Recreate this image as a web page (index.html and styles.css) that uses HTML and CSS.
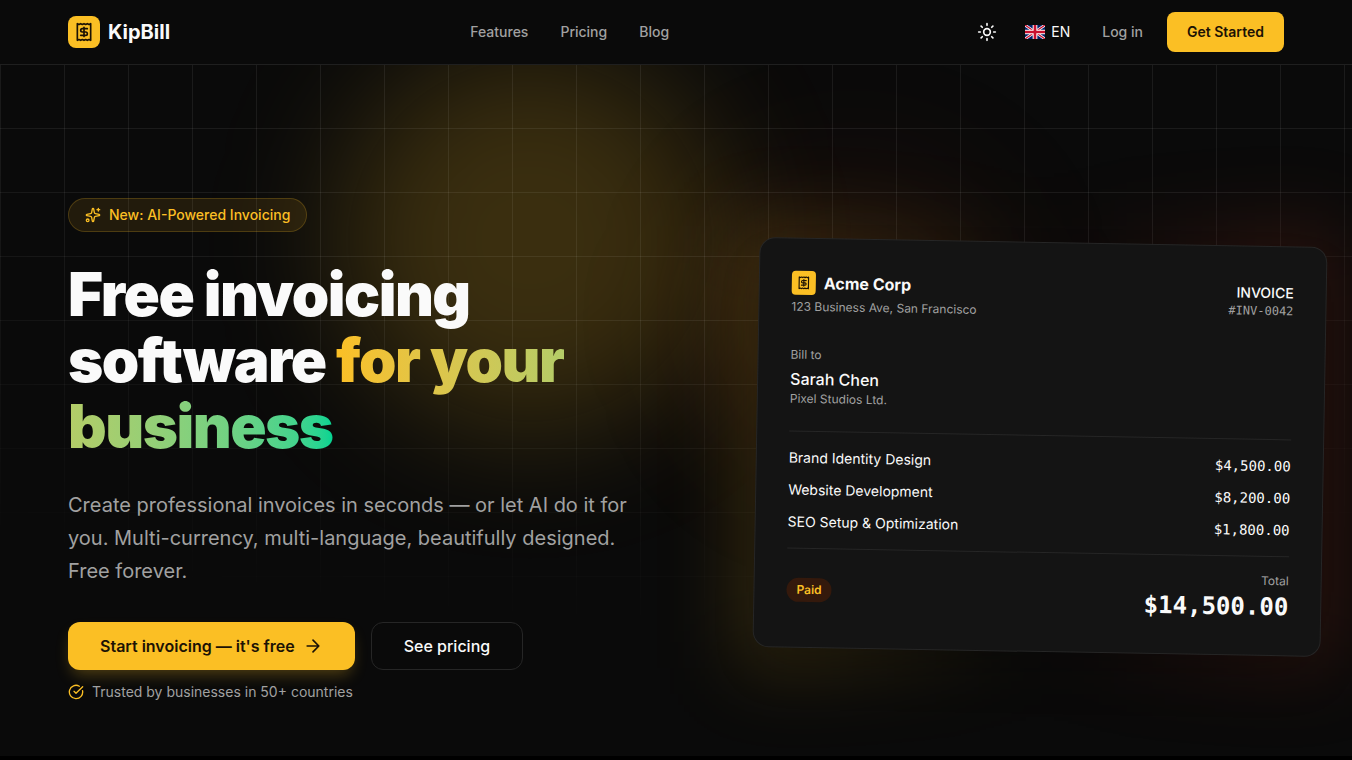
FILE: index.html
```html
<!DOCTYPE html>
<html lang="en">
<head>
    <meta charset="UTF-8">
    <meta name="viewport" content="width=device-width, initial-scale=1.0">
    <title>KipBill - Free invoicing software for your business</title>
    <link rel="stylesheet" href="styles.css">
</head>
<body>
    <!-- shared icons -->
    <svg class="sprite" aria-hidden="true">
        <symbol id="icon-receipt" viewBox="0 0 24 24">
            <path d="M4 2v20l2-1 2 1 2-1 2 1 2-1 2 1 2-1 2 1V2l-2 1-2-1-2 1-2-1-2 1-2-1-2 1Z"/>
            <path d="M16 8h-6a2 2 0 1 0 0 4h4a2 2 0 1 1 0 4H8"/>
            <path d="M12 17.5v-11"/>
        </symbol>
    </svg>

    <header class="site-header">
        <div class="container header-inner">
            <a href="#" class="brand">
                <span class="brand-icon"><svg class="icon" width="20" height="20"><use href="#icon-receipt"/></svg></span>
                KipBill
            </a>
            <nav class="main-nav">
                <a href="#features">Features</a>
                <a href="#pricing">Pricing</a>
                <a href="#blog">Blog</a>
            </nav>
            <div class="header-actions">
                <button type="button" class="theme-toggle" aria-label="Toggle theme">
                    <svg class="icon" width="20" height="20" viewBox="0 0 24 24">
                        <circle cx="12" cy="12" r="4"/>
                        <path d="M12 2v2M12 20v2M4.93 4.93l1.41 1.41M17.66 17.66l1.41 1.41M2 12h2M20 12h2M6.34 17.66l-1.41 1.41M19.07 4.93l-1.41 1.41"/>
                    </svg>
                </button>
                <button type="button" class="lang-button">
                    <svg width="20" height="14" viewBox="0 0 60 42" preserveAspectRatio="none" aria-hidden="true">
                        <rect width="60" height="42" fill="#012169"/>
                        <path d="M0 0l60 42M60 0L0 42" stroke="#fff" stroke-width="8"/>
                        <path d="M0 0l60 42M60 0L0 42" stroke="#c8102e" stroke-width="4"/>
                        <path d="M30 0v42M0 21h60" stroke="#fff" stroke-width="14"/>
                        <path d="M30 0v42M0 21h60" stroke="#c8102e" stroke-width="8"/>
                    </svg>
                    EN
                </button>
                <a href="#login" class="login-link">Log in</a>
                <a href="#signup" class="btn btn-small">Get Started</a>
            </div>
        </div>
    </header>

    <main>
        <section class="hero">
            <div class="hero-glow hero-glow-amber"></div>
            <div class="hero-glow hero-glow-red"></div>
            <div class="hero-grid"></div>

            <div class="container hero-inner">
                <div class="hero-text">
                    <span class="badge">
                        <svg class="icon" width="16" height="16" viewBox="0 0 24 24">
                            <path d="M11.017 2.814a1 1 0 0 1 1.966 0l1.051 5.558a2 2 0 0 0 1.594 1.594l5.558 1.051a1 1 0 0 1 0 1.966l-5.558 1.051a2 2 0 0 0-1.594 1.594l-1.051 5.558a1 1 0 0 1-1.966 0l-1.051-5.558a2 2 0 0 0-1.594-1.594l-5.558-1.051a1 1 0 0 1 0-1.966l5.558-1.051a2 2 0 0 0 1.594-1.594z"/>
                            <path d="M20 2v4M22 4h-4"/>
                            <circle cx="4" cy="20" r="2"/>
                        </svg>
                        New: AI-Powered Invoicing
                    </span>
                    <h1>Free invoicing software <span class="gradient-text">for your business</span></h1>
                    <p class="lead">Create professional invoices in seconds — or let AI do it for you. Multi-currency, multi-language, beautifully designed. Free forever.</p>
                    <div class="hero-buttons">
                        <a href="#signup" class="btn btn-large">
                            Start invoicing — it's free
                            <svg class="icon" width="20" height="20" viewBox="0 0 24 24"><path d="M5 12h14M12 5l7 7-7 7"/></svg>
                        </a>
                        <a href="#pricing" class="btn btn-large btn-outline">See pricing</a>
                    </div>
                    <p class="trusted">
                        <svg class="icon" width="16" height="16" viewBox="0 0 24 24">
                            <path d="M21.801 10A10 10 0 1 1 17 3.335"/>
                            <path d="m9 11 3 3L22 4"/>
                        </svg>
                        Trusted by businesses in 50+ countries
                    </p>
                </div>

                <div class="invoice-wrap">
                    <div class="invoice-glow"></div>
                    <article class="invoice">
                        <div class="invoice-head">
                            <div>
                                <div class="company">
                                    <span class="company-icon"><svg class="icon" width="14" height="14"><use href="#icon-receipt"/></svg></span>
                                    Acme Corp
                                </div>
                                <p class="small">123 Business Ave, San Francisco</p>
                            </div>
                            <div class="invoice-number">
                                <p class="invoice-title">INVOICE</p>
                                <p class="small mono">#INV-0042</p>
                            </div>
                        </div>
                        <div class="bill-to">
                            <p class="small">Bill to</p>
                            <p class="client">Sarah Chen</p>
                            <p class="small">Pixel Studios Ltd.</p>
                        </div>
                        <table class="items">
                            <tbody>
                                <tr><td>Brand Identity Design</td><td class="amount">$4,500.00</td></tr>
                                <tr><td>Website Development</td><td class="amount">$8,200.00</td></tr>
                                <tr><td>SEO Setup &amp; Optimization</td><td class="amount">$1,800.00</td></tr>
                            </tbody>
                        </table>
                        <div class="invoice-foot">
                            <span class="status">Paid</span>
                            <div class="total">
                                <p class="small">Total</p>
                                <p class="total-amount">$14,500.00</p>
                            </div>
                        </div>
                    </article>
                </div>
            </div>
        </section>
    </main>
</body>
</html>
```
FILE: styles.css
```css
* {
    box-sizing: border-box;
}
body {
    margin: 0;
    background: #000;
    color: #fafafa;
    font-family: Inter, "Liberation Sans", sans-serif;
    font-size: 14px;
    line-height: 20px;
}
h1, p {
    margin: 0;
}
a {
    color: inherit;
    text-decoration: none;
}
button {
    border: 0;
    background: none;
    color: inherit;
    font: inherit;
    cursor: pointer;
}
.sprite {
    display: none;
}
.icon {
    flex-shrink: 0;
    fill: none;
    stroke: currentColor;
    stroke-width: 2;
    stroke-linecap: round;
    stroke-linejoin: round;
}
.container {
    width: 100%;
    max-width: 1280px;
    margin: 0 auto;
    padding: 0 32px;
}

/* header */
.site-header {
    position: fixed;
    top: 0;
    left: 0;
    right: 0;
    z-index: 10;
    background: #0a0a0a;
    border-bottom: 1px solid #1f1f1f;
}
.header-inner {
    display: flex;
    align-items: center;
    justify-content: space-between;
    height: 64px;
}
.brand {
    display: flex;
    align-items: center;
    gap: 8px;
    font-size: 20px;
    font-weight: 700;
}
.brand-icon,
.company-icon {
    display: flex;
    align-items: center;
    justify-content: center;
    background: #fbbf24;
    color: #1c1204;
}
.brand-icon {
    width: 32px;
    height: 32px;
    border-radius: 8px;
}
.main-nav {
    display: flex;
    gap: 32px;
    color: #a1a1a1;
    font-weight: 500;
}
.header-actions {
    display: flex;
    align-items: center;
    gap: 12px;
}
.theme-toggle {
    display: flex;
    padding: 8px;
}
.lang-button {
    display: flex;
    align-items: center;
    gap: 6px;
    padding: 8px;
}
.login-link {
    padding: 8px 12px;
    color: #a1a1a1;
    font-weight: 500;
}
.btn {
    display: flex;
    align-items: center;
    justify-content: center;
    gap: 8px;
    background: #fbbf24;
    color: #1c1204;
    font-weight: 600;
}
.btn-small {
    height: 40px;
    padding: 0 20px;
    border-radius: 8px;
}

/* hero */
.hero {
    position: relative;
    overflow: hidden;
    padding: 198px 0 54px;
    background: #0a0a0a;
}
.hero-grid {
    position: absolute;
    inset: 0;
    background-image:
        linear-gradient(to right, rgba(255, 255, 255, 0.07) 1px, transparent 1px),
        linear-gradient(to bottom, rgba(255, 255, 255, 0.07) 1px, transparent 1px);
    background-size: 64px 64px;
    mask-image: radial-gradient(ellipse 100% 85% at 50% 0, #000 50%, transparent 100%);
}
.hero-glow {
    position: absolute;
    border-radius: 50%;
}
.hero-glow-amber {
    top: 48px;
    left: 25%;
    width: 384px;
    height: 384px;
    background: rgba(251, 191, 36, 0.2);
    filter: blur(64px);
}
.hero-glow-red {
    top: 160px;
    right: 25%;
    width: 320px;
    height: 320px;
    background: rgba(200, 60, 20, 0.08);
    filter: blur(64px);
}
.hero-inner {
    position: relative;
    display: grid;
    grid-template-columns: 1fr 1fr;
    align-items: center;
    gap: 64px;
}
.badge {
    display: inline-flex;
    align-items: center;
    gap: 8px;
    padding: 6px 16px;
    border: 1px solid rgba(251, 191, 36, 0.2);
    border-radius: 17px;
    background: rgba(251, 191, 36, 0.1);
    color: #fbbf24;
    font-weight: 500;
    vertical-align: top;
}
h1 {
    margin-top: 29px;
    font-size: 60px;
    font-weight: 900;
    line-height: 66px;
    letter-spacing: -0.025em;
}
.gradient-text {
    background: linear-gradient(to right in oklab, #fbbf24, #00d492);
    -webkit-background-clip: text;
    background-clip: text;
    color: transparent;
}
.lead {
    margin-top: 30px;
    color: #a1a1a1;
    font-size: 20px;
    line-height: 33px;
}
.hero-buttons {
    display: flex;
    gap: 16px;
    margin-top: 34px;
}
.btn-large {
    height: 48px;
    padding: 0 32px;
    border-radius: 12px;
    font-size: 16px;
    box-shadow: 0 8px 16px -4px rgba(251, 191, 36, 0.3);
}
.btn-outline {
    border: 1px solid #262626;
    background: #0a0a0a;
    color: #fafafa;
    font-weight: 500;
    box-shadow: none;
}
.trusted {
    display: flex;
    align-items: center;
    gap: 8px;
    margin-top: 12px;
    color: #a1a1a1;
}
.trusted .icon {
    color: #fbbf24;
}

/* invoice card */
.invoice-wrap {
    position: relative;
    margin: 0 -40px 6px 48px;
}
.invoice-glow {
    position: absolute;
    inset: -16px;
    background: linear-gradient(to right, rgba(251, 191, 36, 0.2), transparent 50%, rgba(200, 60, 30, 0.2));
    filter: blur(40px);
}
.invoice {
    position: relative;
    padding: 32px;
    border: 1px solid #262626;
    border-radius: 16px;
    background: #141414;
    box-shadow: 0 24px 48px -12px rgba(0, 0, 0, 0.25);
    transform: rotate(1deg);
}
.small {
    color: #a1a1a1;
    font-size: 12px;
    line-height: 16px;
}
.mono,
.amount,
.total-amount {
    font-family: "DejaVu Sans Mono", monospace;
}
.invoice-head {
    display: flex;
    align-items: center;
    justify-content: space-between;
}
.company {
    display: flex;
    align-items: center;
    gap: 8px;
    margin-bottom: 4px;
    font-size: 16px;
    font-weight: 700;
    line-height: 24px;
}
.company-icon {
    width: 24px;
    height: 24px;
    border-radius: 4px;
}
.invoice-number,
.total {
    text-align: right;
}
.invoice-title {
    font-weight: 500;
}
.bill-to {
    margin: 32px 0 24px;
}
.client {
    margin-top: 4px;
    font-size: 16px;
    font-weight: 500;
    line-height: 24px;
}
.items {
    display: block;
    padding: 10px 0;
    border-top: 1px solid #262626;
    border-bottom: 1px solid #262626;
}
.items tbody {
    display: block;
}
.items tr {
    display: flex;
    justify-content: space-between;
}
.items td {
    padding: 6px 0;
}
.invoice-foot {
    display: flex;
    align-items: center;
    justify-content: space-between;
    padding-top: 16px;
}
.status {
    padding: 4px 10px;
    border-radius: 12px;
    background: #34190c;
    color: #fbbf24;
    font-size: 12px;
    font-weight: 600;
    line-height: 16px;
}
.total-amount {
    margin-top: 2px;
    font-size: 24px;
    font-weight: 700;
    line-height: 32px;
}
```
